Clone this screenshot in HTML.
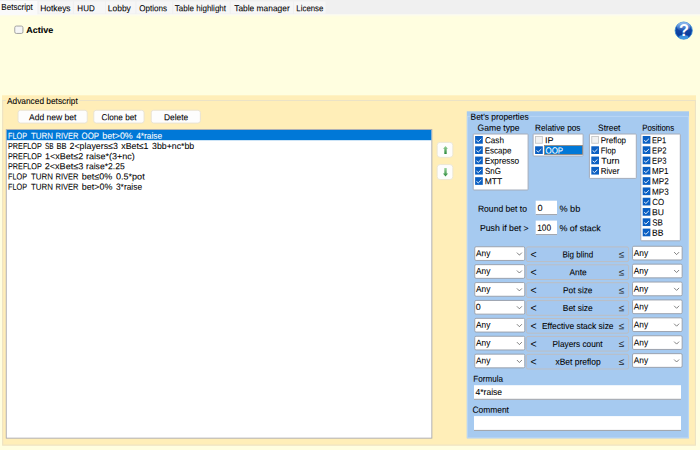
<!DOCTYPE html>
<html><head><meta charset="utf-8"><title>Betscript</title>
<style>
html,body{margin:0;padding:0;}
body{width:700px;height:450px;overflow:hidden;position:relative;background:#fffee0;font-family:"Liberation Sans", sans-serif;font-size:8.8px;}
#g{position:absolute;left:0;top:0;display:block;}
#tx{position:absolute;left:0;top:0;width:700px;height:450px;}
.t{position:absolute;display:block;left:0;top:0;white-space:pre;transform-origin:0 0;line-height:8.8px;color:#000;-webkit-text-stroke:0.07px currentColor;}
</style></head><body>
<svg id="g" width="700" height="450" viewBox="0 0 700 450">
<rect x="0.00" y="0.00" width="700.00" height="14.30" fill="#f0f0f0"/>
<rect x="0.00" y="14.30" width="700.00" height="1.00" fill="#f8f8f5"/>
<rect x="0.00" y="15.30" width="700.00" height="1.00" fill="#fcfcec"/>
<rect x="0.00" y="1.00" width="37.40" height="14.00" fill="#fafafa"/>
<rect x="38.60" y="1.50" width="34.30" height="12.10" fill="#f6f6f6"/>
<rect x="74.00" y="1.50" width="31.00" height="12.10" fill="#f6f6f6"/>
<rect x="105.80" y="1.50" width="29.60" height="12.10" fill="#f6f6f6"/>
<rect x="136.40" y="1.50" width="35.90" height="12.10" fill="#f6f6f6"/>
<rect x="173.20" y="1.50" width="56.60" height="12.10" fill="#f6f6f6"/>
<rect x="230.80" y="1.50" width="62.20" height="12.10" fill="#f6f6f6"/>
<rect x="294.00" y="1.50" width="31.60" height="12.10" fill="#f6f6f6"/>
<rect x="14.75" y="26.05" width="8.20" height="7.40" stroke="#9a9a9a" stroke-width="0.9" rx="1.6" fill="#f6f6f6"/>
<defs><linearGradient id="hg" x1="0" y1="0" x2="0" y2="1"><stop offset="0" stop-color="#3f78cf"/><stop offset="0.45" stop-color="#1247a6"/><stop offset="0.75" stop-color="#0b3c9c"/><stop offset="1" stop-color="#1e6ccc"/></linearGradient>
<linearGradient id="hs" x1="0" y1="0" x2="0" y2="1"><stop offset="0" stop-color="#a8ccf5" stop-opacity="0.9"/><stop offset="1" stop-color="#6fa2e6" stop-opacity="0.05"/></linearGradient>
<linearGradient id="ag" x1="0" y1="0" x2="0" y2="1"><stop offset="0" stop-color="#9bd49c"/><stop offset="1" stop-color="#2c8a3c"/></linearGradient></defs>
<circle cx="683.7" cy="30.6" r="8.6" fill="url(#hg)" stroke="#2b86d6" stroke-width="0.8"/>
<ellipse cx="683.7" cy="26.8" rx="6.8" ry="4.6" fill="url(#hs)"/>
<ellipse cx="683.7" cy="37.0" rx="4.6" ry="1.9" fill="#5cbcf7" opacity="0.6"/>
<text x="683.9" y="36.3" text-anchor="middle" font-family="Liberation Sans, sans-serif" font-weight="bold" font-size="16.4" fill="#ffffff">?</text>
<rect x="2.00" y="95.30" width="694.00" height="350.20" fill="#ffeeb8"/>
<rect x="2.70" y="100.50" width="692.70" height="344.60" stroke="#ebe2c6" stroke-width="1" fill="none"/>
<rect x="5.80" y="97.00" width="73.50" height="8.00" fill="#ffeeb8"/>
<rect x="18.05" y="110.25" width="69.20" height="12.80" stroke="#e6e1d3" stroke-width="0.9" rx="2.4" fill="#fdfdfd"/>
<rect x="93.75" y="110.25" width="50.30" height="12.80" stroke="#e6e1d3" stroke-width="0.9" rx="2.4" fill="#fdfdfd"/>
<rect x="151.25" y="110.25" width="49.10" height="12.80" stroke="#e6e1d3" stroke-width="0.9" rx="2.4" fill="#fdfdfd"/>
<rect x="6.25" y="129.55" width="425.60" height="308.60" stroke="#a8a9b0" stroke-width="0.9" fill="#fff"/>
<rect x="6.70" y="130.00" width="424.60" height="10.20" fill="#0078d7"/>
<rect x="437.15" y="142.35" width="15.70" height="15.00" stroke="#ebe5d2" stroke-width="0.9" rx="3" fill="#fdfdfd"/>
<path d="M445.5 145.9 L447.9 148.79999999999998 L446.7 148.79999999999998 L446.7 154.0 L444.3 154.0 L444.3 148.79999999999998 L443.1 148.79999999999998 Z" fill="url(#ag)"/>
<rect x="437.15" y="164.55" width="15.70" height="15.00" stroke="#ebe5d2" stroke-width="0.9" rx="3" fill="#fdfdfd"/>
<path d="M445.5 176.49999999999997 L448.1 173.39999999999998 L446.7 173.39999999999998 L446.7 168.1 L444.3 168.1 L444.3 173.39999999999998 L442.9 173.39999999999998 Z" fill="url(#ag)"/>
<rect x="466.80" y="111.30" width="222.20" height="327.00" fill="#a6caf0"/>
<rect x="467.40" y="116.40" width="221.00" height="321.40" stroke="#bad6f5" stroke-width="1" fill="none"/>
<rect x="470.00" y="113.00" width="60.00" height="8.00" fill="#a6caf0"/>
<rect x="473.20" y="134.00" width="54.90" height="56.00" stroke="#a4acba" stroke-width="1" rx="0.8" fill="#fff"/>
<rect x="475.10" y="136.00" width="7.70" height="7.70" fill="#0b5fc2"/>
<path d="M476.50 140.30 L478.30 141.70 L481.30 138.80" fill="none" stroke="#fff" stroke-width="0.9"/>
<rect x="475.10" y="146.29" width="7.70" height="7.70" fill="#0b5fc2"/>
<path d="M476.50 150.59 L478.30 151.99 L481.30 149.09" fill="none" stroke="#fff" stroke-width="0.9"/>
<rect x="475.10" y="156.58" width="7.70" height="7.70" fill="#0b5fc2"/>
<path d="M476.50 160.88 L478.30 162.28 L481.30 159.38" fill="none" stroke="#fff" stroke-width="0.9"/>
<rect x="475.10" y="166.87" width="7.70" height="7.70" fill="#0b5fc2"/>
<path d="M476.50 171.17 L478.30 172.57 L481.30 169.67" fill="none" stroke="#fff" stroke-width="0.9"/>
<rect x="475.10" y="177.16" width="7.70" height="7.70" fill="#0b5fc2"/>
<path d="M476.50 181.46 L478.30 182.86 L481.30 179.96" fill="none" stroke="#fff" stroke-width="0.9"/>
<rect x="533.10" y="134.00" width="50.00" height="22.00" stroke="#a4acba" stroke-width="1" rx="0.8" fill="#fff"/>
<rect x="535.55" y="136.45" width="6.80" height="6.80" stroke="#c6c6c6" stroke-width="0.9" fill="#f2f2f2"/>
<rect x="544.45" y="145.54" width="38.10" height="9.05" stroke="#9a7c66" stroke-width="0.7" fill="#0078d7"/>
<rect x="535.10" y="146.29" width="7.70" height="7.70" fill="#0b5fc2"/>
<path d="M536.50 150.59 L538.30 151.99 L541.30 149.09" fill="none" stroke="#fff" stroke-width="0.9"/>
<rect x="589.40" y="134.00" width="46.90" height="44.40" stroke="#a4acba" stroke-width="1" rx="0.8" fill="#fff"/>
<rect x="591.75" y="136.45" width="6.80" height="6.80" stroke="#c6c6c6" stroke-width="0.9" fill="#f2f2f2"/>
<rect x="591.30" y="146.29" width="7.70" height="7.70" fill="#0b5fc2"/>
<path d="M592.70 150.59 L594.50 151.99 L597.50 149.09" fill="none" stroke="#fff" stroke-width="0.9"/>
<rect x="591.30" y="156.58" width="7.70" height="7.70" fill="#0b5fc2"/>
<path d="M592.70 160.88 L594.50 162.28 L597.50 159.38" fill="none" stroke="#fff" stroke-width="0.9"/>
<rect x="591.30" y="166.87" width="7.70" height="7.70" fill="#0b5fc2"/>
<path d="M592.70 171.17 L594.50 172.57 L597.50 169.67" fill="none" stroke="#fff" stroke-width="0.9"/>
<rect x="640.80" y="134.00" width="39.50" height="106.80" stroke="#a4acba" stroke-width="1" rx="0.8" fill="#fff"/>
<rect x="642.70" y="136.00" width="7.70" height="7.70" fill="#0b5fc2"/>
<path d="M644.10 140.30 L645.90 141.70 L648.90 138.80" fill="none" stroke="#fff" stroke-width="0.9"/>
<rect x="642.70" y="146.29" width="7.70" height="7.70" fill="#0b5fc2"/>
<path d="M644.10 150.59 L645.90 151.99 L648.90 149.09" fill="none" stroke="#fff" stroke-width="0.9"/>
<rect x="642.70" y="156.58" width="7.70" height="7.70" fill="#0b5fc2"/>
<path d="M644.10 160.88 L645.90 162.28 L648.90 159.38" fill="none" stroke="#fff" stroke-width="0.9"/>
<rect x="642.70" y="166.87" width="7.70" height="7.70" fill="#0b5fc2"/>
<path d="M644.10 171.17 L645.90 172.57 L648.90 169.67" fill="none" stroke="#fff" stroke-width="0.9"/>
<rect x="642.70" y="177.16" width="7.70" height="7.70" fill="#0b5fc2"/>
<path d="M644.10 181.46 L645.90 182.86 L648.90 179.96" fill="none" stroke="#fff" stroke-width="0.9"/>
<rect x="642.70" y="187.45" width="7.70" height="7.70" fill="#0b5fc2"/>
<path d="M644.10 191.75 L645.90 193.15 L648.90 190.25" fill="none" stroke="#fff" stroke-width="0.9"/>
<rect x="642.70" y="197.74" width="7.70" height="7.70" fill="#0b5fc2"/>
<path d="M644.10 202.04 L645.90 203.44 L648.90 200.54" fill="none" stroke="#fff" stroke-width="0.9"/>
<rect x="642.70" y="208.03" width="7.70" height="7.70" fill="#0b5fc2"/>
<path d="M644.10 212.33 L645.90 213.73 L648.90 210.83" fill="none" stroke="#fff" stroke-width="0.9"/>
<rect x="642.70" y="218.32" width="7.70" height="7.70" fill="#0b5fc2"/>
<path d="M644.10 222.62 L645.90 224.02 L648.90 221.12" fill="none" stroke="#fff" stroke-width="0.9"/>
<rect x="642.70" y="228.61" width="7.70" height="7.70" fill="#0b5fc2"/>
<path d="M644.10 232.91 L645.90 234.31 L648.90 231.41" fill="none" stroke="#fff" stroke-width="0.9"/>
<rect x="535.70" y="200.70" width="21.30" height="14.40" fill="#fff"/>
<rect x="535.70" y="214.10" width="21.30" height="1.00" fill="#9a9ea6"/>
<rect x="535.70" y="220.60" width="21.30" height="14.50" fill="#fff"/>
<rect x="535.70" y="234.10" width="21.30" height="1.00" fill="#9a9ea6"/>
<rect x="474.75" y="246.75" width="50.00" height="13.70" stroke="#969ca6" stroke-width="0.9" rx="1.3" fill="#fff"/>
<path d="M516.90 252.60 L519.40 255.10 L521.90 252.60" fill="none" stroke="#585858" stroke-width="0.75"/>
<rect x="526.40" y="246.90" width="102.20" height="14.70" stroke="#bcbec3" stroke-width="1.0" rx="1.6" fill="#a5c8ef"/>
<rect x="632.55" y="246.25" width="49.60" height="13.70" stroke="#969ca6" stroke-width="0.9" rx="1.3" fill="#fff"/>
<path d="M674.10 252.10 L676.60 254.60 L679.10 252.10" fill="none" stroke="#585858" stroke-width="0.75"/>
<rect x="474.75" y="264.65" width="50.00" height="13.70" stroke="#969ca6" stroke-width="0.9" rx="1.3" fill="#fff"/>
<path d="M516.90 270.50 L519.40 273.00 L521.90 270.50" fill="none" stroke="#585858" stroke-width="0.75"/>
<rect x="526.40" y="264.80" width="102.20" height="14.70" stroke="#bcbec3" stroke-width="1.0" rx="1.6" fill="#a5c8ef"/>
<rect x="632.55" y="264.15" width="49.60" height="13.70" stroke="#969ca6" stroke-width="0.9" rx="1.3" fill="#fff"/>
<path d="M674.10 270.00 L676.60 272.50 L679.10 270.00" fill="none" stroke="#585858" stroke-width="0.75"/>
<rect x="474.75" y="282.55" width="50.00" height="13.70" stroke="#969ca6" stroke-width="0.9" rx="1.3" fill="#fff"/>
<path d="M516.90 288.40 L519.40 290.90 L521.90 288.40" fill="none" stroke="#585858" stroke-width="0.75"/>
<rect x="526.40" y="282.70" width="102.20" height="14.70" stroke="#bcbec3" stroke-width="1.0" rx="1.6" fill="#a5c8ef"/>
<rect x="632.55" y="282.05" width="49.60" height="13.70" stroke="#969ca6" stroke-width="0.9" rx="1.3" fill="#fff"/>
<path d="M674.10 287.90 L676.60 290.40 L679.10 287.90" fill="none" stroke="#585858" stroke-width="0.75"/>
<rect x="474.75" y="300.45" width="50.00" height="13.70" stroke="#969ca6" stroke-width="0.9" rx="1.3" fill="#fff"/>
<path d="M516.90 306.30 L519.40 308.80 L521.90 306.30" fill="none" stroke="#585858" stroke-width="0.75"/>
<rect x="526.40" y="300.60" width="102.20" height="14.70" stroke="#bcbec3" stroke-width="1.0" rx="1.6" fill="#a5c8ef"/>
<rect x="632.55" y="299.95" width="49.60" height="13.70" stroke="#969ca6" stroke-width="0.9" rx="1.3" fill="#fff"/>
<path d="M674.10 305.80 L676.60 308.30 L679.10 305.80" fill="none" stroke="#585858" stroke-width="0.75"/>
<rect x="474.75" y="318.35" width="50.00" height="13.70" stroke="#969ca6" stroke-width="0.9" rx="1.3" fill="#fff"/>
<path d="M516.90 324.20 L519.40 326.70 L521.90 324.20" fill="none" stroke="#585858" stroke-width="0.75"/>
<rect x="526.40" y="318.50" width="102.20" height="14.70" stroke="#bcbec3" stroke-width="1.0" rx="1.6" fill="#a5c8ef"/>
<rect x="632.55" y="317.85" width="49.60" height="13.70" stroke="#969ca6" stroke-width="0.9" rx="1.3" fill="#fff"/>
<path d="M674.10 323.70 L676.60 326.20 L679.10 323.70" fill="none" stroke="#585858" stroke-width="0.75"/>
<rect x="474.75" y="336.25" width="50.00" height="13.70" stroke="#969ca6" stroke-width="0.9" rx="1.3" fill="#fff"/>
<path d="M516.90 342.10 L519.40 344.60 L521.90 342.10" fill="none" stroke="#585858" stroke-width="0.75"/>
<rect x="526.40" y="336.40" width="102.20" height="14.70" stroke="#bcbec3" stroke-width="1.0" rx="1.6" fill="#a5c8ef"/>
<rect x="632.55" y="335.75" width="49.60" height="13.70" stroke="#969ca6" stroke-width="0.9" rx="1.3" fill="#fff"/>
<path d="M674.10 341.60 L676.60 344.10 L679.10 341.60" fill="none" stroke="#585858" stroke-width="0.75"/>
<rect x="474.75" y="354.15" width="50.00" height="13.70" stroke="#969ca6" stroke-width="0.9" rx="1.3" fill="#fff"/>
<path d="M516.90 360.00 L519.40 362.50 L521.90 360.00" fill="none" stroke="#585858" stroke-width="0.75"/>
<rect x="526.40" y="354.30" width="102.20" height="14.70" stroke="#bcbec3" stroke-width="1.0" rx="1.6" fill="#a5c8ef"/>
<rect x="632.55" y="353.65" width="49.60" height="13.70" stroke="#969ca6" stroke-width="0.9" rx="1.3" fill="#fff"/>
<path d="M674.10 359.50 L676.60 362.00 L679.10 359.50" fill="none" stroke="#585858" stroke-width="0.75"/>
<rect x="474.00" y="385.20" width="207.00" height="14.60" fill="#fff"/>
<rect x="474.00" y="398.80" width="207.00" height="1.00" fill="#9a9ea6"/>
<rect x="474.00" y="416.10" width="207.00" height="14.80" fill="#fff"/>
<rect x="474.00" y="429.90" width="207.00" height="1.00" fill="#9a9ea6"/>
</svg>
<div id="tx">
<span class="t" style="transform:matrix(0.9151,0.0007,0,1,1.36,3.00);">Betscript</span>
<span class="t" style="transform:matrix(0.9578,0.0007,0,1,40.13,4.20);">Hotkeys</span>
<span class="t" style="transform:matrix(0.9080,0.0007,0,1,77.36,4.20);">HUD</span>
<span class="t" style="transform:matrix(0.9599,0.0007,0,1,107.82,4.20);">Lobby</span>
<span class="t" style="transform:matrix(0.9165,0.0007,0,1,139.30,4.20);">Options</span>
<span class="t" style="transform:matrix(0.9098,0.0007,0,1,174.84,4.20);">Table highlight</span>
<span class="t" style="transform:matrix(0.9533,0.0007,0,1,234.23,4.20);">Table manager</span>
<span class="t" style="transform:matrix(0.8899,0.0007,0,1,296.37,4.20);">License</span>
<span class="t" style="transform:matrix(1.0243,0.0007,0,1,26.23,26.00);font-weight:bold;">Active</span>
<span class="t" style="transform:matrix(0.9465,0.0007,0,1,7.00,96.90);">Advanced betscript</span>
<span class="t" style="transform:matrix(0.9705,0.0007,0,1,29.00,113.20);">Add new bet</span>
<span class="t" style="transform:matrix(0.9263,0.0007,0,1,101.59,113.20);">Clone bet</span>
<span class="t" style="transform:matrix(0.9518,0.0007,0,1,164.03,113.20);">Delete</span>
<span class="t" style="transform:matrix(0.8248,0.0007,0,1,8.02,131.80);color:#fff;">FLOP </span>
<span class="t" style="transform:matrix(0.8989,0.0007,0,1,30.94,131.80);color:#fff;">TURN </span>
<span class="t" style="transform:matrix(0.8562,0.0007,0,1,55.50,131.80);color:#fff;">RIVER </span>
<span class="t" style="transform:matrix(0.8952,0.0007,0,1,81.51,131.80);color:#fff;">OOP </span>
<span class="t" style="transform:matrix(1.0097,0.0007,0,1,102.37,131.80);color:#fff;">bet&gt;0% </span>
<span class="t" style="transform:matrix(0.9463,0.0007,0,1,136.13,131.80);color:#fff;">4*raise</span>
<span class="t" style="transform:matrix(0.8228,0.0007,0,1,8.02,141.98);">PREFLOP </span>
<span class="t" style="transform:matrix(0.7299,0.0007,0,1,45.08,141.98);">SB </span>
<span class="t" style="transform:matrix(0.8523,0.0007,0,1,56.50,141.98);">BB </span>
<span class="t" style="transform:matrix(1.0030,0.0007,0,1,69.56,141.98);">2&lt;players≤3 </span>
<span class="t" style="transform:matrix(0.9948,0.0007,0,1,121.31,141.98);">xBet≤1 </span>
<span class="t" style="transform:matrix(0.9970,0.0007,0,1,152.05,141.98);">3bb+nc*bb</span>
<span class="t" style="transform:matrix(0.8228,0.0007,0,1,8.02,152.16);">PREFLOP </span>
<span class="t" style="transform:matrix(1.0260,0.0007,0,1,44.98,152.16);">1&lt;xBet≤2 </span>
<span class="t" style="transform:matrix(1.0225,0.0007,0,1,86.07,152.16);">raise*(3+nc)</span>
<span class="t" style="transform:matrix(0.8228,0.0007,0,1,8.02,162.34);">PREFLOP </span>
<span class="t" style="transform:matrix(1.0350,0.0007,0,1,44.64,162.34);">2&lt;xBet≤3 </span>
<span class="t" style="transform:matrix(0.9733,0.0007,0,1,86.10,162.34);">raise*2.25</span>
<span class="t" style="transform:matrix(0.8248,0.0007,0,1,8.02,172.52);">FLOP </span>
<span class="t" style="transform:matrix(0.8989,0.0007,0,1,30.94,172.52);">TURN </span>
<span class="t" style="transform:matrix(0.8562,0.0007,0,1,55.50,172.52);">RIVER </span>
<span class="t" style="transform:matrix(1.0224,0.0007,0,1,81.86,172.52);">bet≤0% </span>
<span class="t" style="transform:matrix(1.0307,0.0007,0,1,115.94,172.52);">0.5*pot</span>
<span class="t" style="transform:matrix(0.8248,0.0007,0,1,8.02,182.70);">FLOP </span>
<span class="t" style="transform:matrix(0.8989,0.0007,0,1,30.94,182.70);">TURN </span>
<span class="t" style="transform:matrix(0.8562,0.0007,0,1,55.50,182.70);">RIVER </span>
<span class="t" style="transform:matrix(1.0131,0.0007,0,1,81.87,182.70);">bet&gt;0% </span>
<span class="t" style="transform:matrix(0.9526,0.0007,0,1,115.96,182.70);">3*raise</span>
<span class="t" style="transform:matrix(0.9542,0.0007,0,1,470.53,112.70);">Bet&#x27;s properties</span>
<span class="t" style="transform:matrix(0.9754,0.0007,0,1,477.57,123.80);">Game type</span>
<span class="t" style="transform:matrix(0.9382,0.0007,0,1,535.04,123.80);">Relative pos</span>
<span class="t" style="transform:matrix(0.9491,0.0007,0,1,598.08,123.80);">Street</span>
<span class="t" style="transform:matrix(0.8912,0.0007,0,1,642.27,123.80);">Positions</span>
<span class="t" style="transform:matrix(0.9214,0.0007,0,1,484.99,136.20);">Cash</span>
<span class="t" style="transform:matrix(0.9098,0.0007,0,1,484.76,146.49);">Escape</span>
<span class="t" style="transform:matrix(0.9371,0.0007,0,1,484.74,156.78);">Expresso</span>
<span class="t" style="transform:matrix(0.9006,0.0007,0,1,485.00,167.07);">SnG</span>
<span class="t" style="transform:matrix(0.9674,0.0007,0,1,484.72,177.36);">MTT</span>
<span class="t" style="transform:matrix(1.0227,0.0007,0,1,545.09,136.20);">IP</span>
<span class="t" style="transform:matrix(0.9005,0.0007,0,1,545.50,146.49);color:#fff;">OOP</span>
<span class="t" style="transform:matrix(0.9054,0.0007,0,1,600.76,136.20);">Preflop</span>
<span class="t" style="transform:matrix(0.8804,0.0007,0,1,600.78,146.49);">Flop</span>
<span class="t" style="transform:matrix(1.0304,0.0007,0,1,601.22,156.78);">Turn</span>
<span class="t" style="transform:matrix(0.9131,0.0007,0,1,600.76,167.07);">River</span>
<span class="t" style="transform:matrix(0.8523,0.0007,0,1,652.10,136.20);">EP1</span>
<span class="t" style="transform:matrix(0.8652,0.0007,0,1,652.09,146.49);">EP2</span>
<span class="t" style="transform:matrix(0.8603,0.0007,0,1,652.09,156.78);">EP3</span>
<span class="t" style="transform:matrix(0.9067,0.0007,0,1,652.06,167.07);">MP1</span>
<span class="t" style="transform:matrix(0.9185,0.0007,0,1,652.05,177.36);">MP2</span>
<span class="t" style="transform:matrix(0.9185,0.0007,0,1,652.05,187.65);">MP3</span>
<span class="t" style="transform:matrix(0.8929,0.0007,0,1,652.31,197.94);">CO</span>
<span class="t" style="transform:matrix(0.9793,0.0007,0,1,652.01,208.23);">BU</span>
<span class="t" style="transform:matrix(0.9054,0.0007,0,1,652.30,218.52);">SB</span>
<span class="t" style="transform:matrix(0.9754,0.0007,0,1,652.01,228.81);">BB</span>
<span class="t" style="transform:matrix(0.9740,0.0007,0,1,477.91,204.80);">Round bet to</span>
<span class="t" style="transform:matrix(1.0417,0.0007,0,1,537.43,203.90);">0</span>
<span class="t" style="transform:matrix(1.0382,0.0007,0,1,559.43,204.70);">% bb</span>
<span class="t" style="transform:matrix(0.9928,0.0007,0,1,479.90,224.10);">Push if bet &gt;</span>
<span class="t" style="transform:matrix(0.9457,0.0007,0,1,537.13,223.80);">100</span>
<span class="t" style="transform:matrix(1.0145,0.0007,0,1,559.44,224.20);">% of stack</span>
<span class="t" style="transform:matrix(0.9448,0.0007,0,1,476.00,249.20);">Any</span>
<span class="t" style="transform:matrix(0.9913,0.0007,0,1,530.58,248.91);font-size:10.5px;line-height:10.5px;">&lt;</span>
<span class="t" style="transform:matrix(0.9146,0.0007,0,1,562.41,250.40);">Big blind</span>
<span class="t" style="transform:matrix(1.0638,0.0007,0,1,618.80,249.59);font-size:9.4px;line-height:9.4px;-webkit-text-stroke:0;color:#1c1c1c;">≤</span>
<span class="t" style="transform:matrix(0.9448,0.0007,0,1,633.80,248.90);">Any</span>
<span class="t" style="transform:matrix(0.9448,0.0007,0,1,476.00,267.10);">Any</span>
<span class="t" style="transform:matrix(0.9913,0.0007,0,1,530.58,266.81);font-size:10.5px;line-height:10.5px;">&lt;</span>
<span class="t" style="transform:matrix(0.9498,0.0007,0,1,569.50,268.30);">Ante</span>
<span class="t" style="transform:matrix(1.0638,0.0007,0,1,618.80,267.49);font-size:9.4px;line-height:9.4px;-webkit-text-stroke:0;color:#1c1c1c;">≤</span>
<span class="t" style="transform:matrix(0.9448,0.0007,0,1,633.80,266.80);">Any</span>
<span class="t" style="transform:matrix(0.9448,0.0007,0,1,476.00,285.00);">Any</span>
<span class="t" style="transform:matrix(0.9913,0.0007,0,1,530.58,284.71);font-size:10.5px;line-height:10.5px;">&lt;</span>
<span class="t" style="transform:matrix(0.9376,0.0007,0,1,563.09,286.20);">Pot size</span>
<span class="t" style="transform:matrix(1.0638,0.0007,0,1,618.80,285.39);font-size:9.4px;line-height:9.4px;-webkit-text-stroke:0;color:#1c1c1c;">≤</span>
<span class="t" style="transform:matrix(0.9448,0.0007,0,1,633.80,284.70);">Any</span>
<span class="t" style="transform:matrix(1.0180,0.0007,0,1,475.64,302.90);">0</span>
<span class="t" style="transform:matrix(0.9913,0.0007,0,1,530.58,302.61);font-size:10.5px;line-height:10.5px;">&lt;</span>
<span class="t" style="transform:matrix(0.9575,0.0007,0,1,562.78,304.10);">Bet size</span>
<span class="t" style="transform:matrix(1.0638,0.0007,0,1,618.80,303.29);font-size:9.4px;line-height:9.4px;-webkit-text-stroke:0;color:#1c1c1c;">≤</span>
<span class="t" style="transform:matrix(0.9448,0.0007,0,1,633.80,302.60);">Any</span>
<span class="t" style="transform:matrix(0.9448,0.0007,0,1,476.00,320.80);">Any</span>
<span class="t" style="transform:matrix(0.9913,0.0007,0,1,530.58,320.51);font-size:10.5px;line-height:10.5px;">&lt;</span>
<span class="t" style="transform:matrix(0.9597,0.0007,0,1,541.92,322.00);">Effective stack size</span>
<span class="t" style="transform:matrix(1.0638,0.0007,0,1,618.80,321.19);font-size:9.4px;line-height:9.4px;-webkit-text-stroke:0;color:#1c1c1c;">≤</span>
<span class="t" style="transform:matrix(0.9448,0.0007,0,1,633.80,320.50);">Any</span>
<span class="t" style="transform:matrix(0.9448,0.0007,0,1,476.00,338.70);">Any</span>
<span class="t" style="transform:matrix(0.9913,0.0007,0,1,530.58,338.41);font-size:10.5px;line-height:10.5px;">&lt;</span>
<span class="t" style="transform:matrix(0.9384,0.0007,0,1,552.59,339.90);">Players count</span>
<span class="t" style="transform:matrix(1.0638,0.0007,0,1,618.80,339.09);font-size:9.4px;line-height:9.4px;-webkit-text-stroke:0;color:#1c1c1c;">≤</span>
<span class="t" style="transform:matrix(0.9448,0.0007,0,1,633.80,338.40);">Any</span>
<span class="t" style="transform:matrix(0.9448,0.0007,0,1,476.00,356.60);">Any</span>
<span class="t" style="transform:matrix(0.9913,0.0007,0,1,530.58,356.31);font-size:10.5px;line-height:10.5px;">&lt;</span>
<span class="t" style="transform:matrix(0.9620,0.0007,0,1,555.47,357.80);">xBet preflop</span>
<span class="t" style="transform:matrix(1.0638,0.0007,0,1,618.80,356.99);font-size:9.4px;line-height:9.4px;-webkit-text-stroke:0;color:#1c1c1c;">≤</span>
<span class="t" style="transform:matrix(0.9448,0.0007,0,1,633.80,356.30);">Any</span>
<span class="t" style="transform:matrix(0.9211,0.0007,0,1,473.35,374.80);">Formula</span>
<span class="t" style="transform:matrix(0.9687,0.0007,0,1,475.53,388.00);">4*raise</span>
<span class="t" style="transform:matrix(0.9558,0.0007,0,1,472.48,405.70);">Comment</span>
</div>
</body></html>
